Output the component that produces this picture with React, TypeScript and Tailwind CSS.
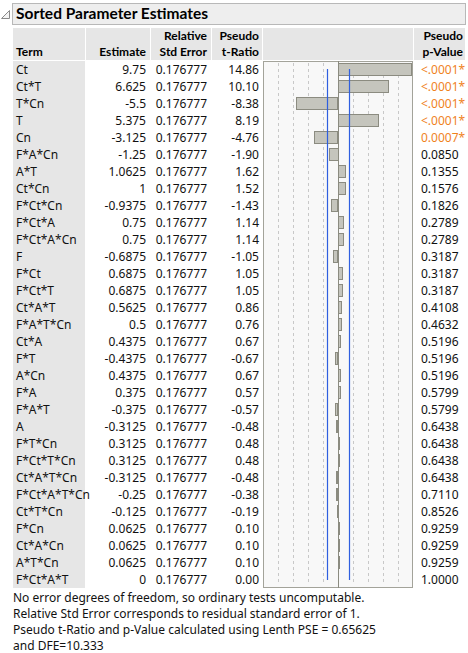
import React from "react";

const rows: [string, string, string, string][] = [
  ["Ct", "9.75", "14.86", "<.0001*"],
  ["Ct*T", "6.625", "10.10", "<.0001*"],
  ["T*Cn", "-5.5", "-8.38", "<.0001*"],
  ["T", "5.375", "8.19", "<.0001*"],
  ["Cn", "-3.125", "-4.76", "0.0007*"],
  ["F*A*Cn", "-1.25", "-1.90", "0.0850"],
  ["A*T", "1.0625", "1.62", "0.1355"],
  ["Ct*Cn", "1", "1.52", "0.1576"],
  ["F*Ct*Cn", "-0.9375", "-1.43", "0.1826"],
  ["F*Ct*A", "0.75", "1.14", "0.2789"],
  ["F*Ct*A*Cn", "0.75", "1.14", "0.2789"],
  ["F", "-0.6875", "-1.05", "0.3187"],
  ["F*Ct", "0.6875", "1.05", "0.3187"],
  ["F*Ct*T", "0.6875", "1.05", "0.3187"],
  ["Ct*A*T", "0.5625", "0.86", "0.4108"],
  ["F*A*T*Cn", "0.5", "0.76", "0.4632"],
  ["Ct*A", "0.4375", "0.67", "0.5196"],
  ["F*T", "-0.4375", "-0.67", "0.5196"],
  ["A*Cn", "0.4375", "0.67", "0.5196"],
  ["F*A", "0.375", "0.57", "0.5799"],
  ["F*A*T", "-0.375", "-0.57", "0.5799"],
  ["A", "-0.3125", "-0.48", "0.6438"],
  ["F*T*Cn", "0.3125", "0.48", "0.6438"],
  ["F*Ct*T*Cn", "0.3125", "0.48", "0.6438"],
  ["Ct*A*T*Cn", "-0.3125", "-0.48", "0.6438"],
  ["F*Ct*A*T*Cn", "-0.25", "-0.38", "0.7110"],
  ["Ct*T*Cn", "-0.125", "-0.19", "0.8526"],
  ["F*Cn", "0.0625", "0.10", "0.9259"],
  ["Ct*A*Cn", "0.0625", "0.10", "0.9259"],
  ["A*T*Cn", "0.0625", "0.10", "0.9259"],
  ["F*Ct*A*T", "0", "0.00", "1.0000"],
];

const ROW = 17;
const CH_W = 150;
const CH_H = rows.length * ROW;

function Chart() {
  const zero = 75;
  const scale = 5;
  const grids = [15, 30, 45, 60, 90, 105, 120, 135];
  return (
    <svg width={CH_W} height={CH_H} className="block">
      <rect x={0.5} y={0.5} width={CH_W - 1} height={CH_H - 1} fill="#f8f8f8" stroke="#a3a39a" />
      {grids.map((g) => (
        <line key={g} x1={g + 0.5} x2={g + 0.5} y1={2} y2={CH_H - 4} stroke="#c8c8c8" strokeDasharray="3 3" />
      ))}
      {rows.map((r, i) => {
        const v = parseFloat(r[2]);
        const w = Math.min(Math.abs(v) * scale, 74);
        if (w < 0.5) return null;
        const x = v >= 0 ? zero : zero - w;
        return (
          <rect
            key={i}
            x={Math.round(x) + 0.5}
            y={i * ROW + 2.5}
            width={Math.max(Math.round(w) - 1, 1)}
            height={12}
            fill="#c5c5bd"
            stroke="#8b8b80"
          />
        );
      })}
      <line x1={zero + 0.5} x2={zero + 0.5} y1={0} y2={CH_H} stroke="#8b8b80" />
      <line x1={64.5} x2={64.5} y1={8} y2={CH_H - 8} stroke="#2f5fe0" strokeWidth={1.2} />
      <line x1={86.5} x2={86.5} y1={8} y2={CH_H - 8} stroke="#2f5fe0" strokeWidth={1.2} />
    </svg>
  );
}

const BOLD = { fontFamily: 'Lato, "Noto Sans", sans-serif' };

export default function App() {
  return (
    <div
      className="bg-white w-[468px] h-[653px] text-[12px] text-[#111] relative"
      style={{ fontFamily: '"Noto Sans", "Open Sans", sans-serif' }}
    >
      <div className="flex items-start pt-[3px]">
        <svg width="12" height="22" className="shrink-0">
          <polygon points="9.5,7.5 9.5,15.5 1.5,15.5" fill="#f4f4f4" stroke="#8a8a8a" />
        </svg>
        <div className="w-[454px] h-[22px] border border-[#b8b8b8] bg-[#eeeeee] flex items-center pl-[3px]">
          <span className="font-bold text-[15.5px] leading-none text-black" style={BOLD}>
            Sorted Parameter Estimates
          </span>
        </div>
      </div>

      <div className="ml-[13px] mt-[3px]">
        {/* header */}
        <div className="flex gap-px h-[32px] leading-[16px] font-bold text-black" style={BOLD}>
          <div className="w-[72px] bg-[#e6e6e6] flex items-end pl-[3px]">Term</div>
          <div className="w-[64px] bg-[#e6e6e6] flex items-end justify-end pr-[4px]">Estimate</div>
          <div className="w-[60px] bg-[#e6e6e6] flex flex-col items-end justify-end pr-[4px]">
            <span>Relative</span>
            <span>Std Error</span>
          </div>
          <div className="w-[50px] bg-[#e6e6e6] flex flex-col items-end justify-end pr-[3px]">
            <span>Pseudo</span>
            <span>t-Ratio</span>
          </div>
          <div className="w-[150px] bg-[#e6e6e6]" />
          <div className="w-[51px] bg-[#e6e6e6] flex flex-col items-end justify-end pr-[2px]">
            <span>Pseudo</span>
            <span>p-Value</span>
          </div>
        </div>

        {/* body */}
        <div className="flex gap-px mt-px leading-[17px]">
          <div className="w-[72px] bg-[#e6e6e6] flex flex-col pl-[3px]">
            {rows.map((r, i) => (
              <div key={i} className="h-[17px]">{r[0]}</div>
            ))}
          </div>
          <div className="w-[64px] flex flex-col items-end pr-[4px]">
            {rows.map((r, i) => (
              <div key={i} className="h-[17px]">{r[1]}</div>
            ))}
          </div>
          <div className="w-[60px] flex flex-col items-end pr-[4px]">
            {rows.map((_, i) => (
              <div key={i} className="h-[17px]">0.176777</div>
            ))}
          </div>
          <div className="w-[50px] flex flex-col items-end pr-[3px]">
            {rows.map((r, i) => (
              <div key={i} className="h-[17px]">{r[2]}</div>
            ))}
          </div>
          <div className="w-[150px]">
            <Chart />
          </div>
          <div className="w-[51px] flex flex-col pl-[7px]">
            {rows.map((r, i) => (
              <div key={i} className={"h-[17px] " + (r[3].endsWith("*") ? "text-[#f0821e]" : "")}>
                {r[3]}
              </div>
            ))}
          </div>
        </div>

        {/* footer */}
        <div className="mt-[2px] leading-[16px]">
          <div>No error degrees of freedom, so ordinary tests uncomputable.</div>
          <div>Relative Std Error corresponds to residual standard error of 1.</div>
          <div>Pseudo t-Ratio and p-Value calculated using Lenth PSE = 0.65625</div>
          <div>and DFE=10.333</div>
        </div>
      </div>
    </div>
  );
}
